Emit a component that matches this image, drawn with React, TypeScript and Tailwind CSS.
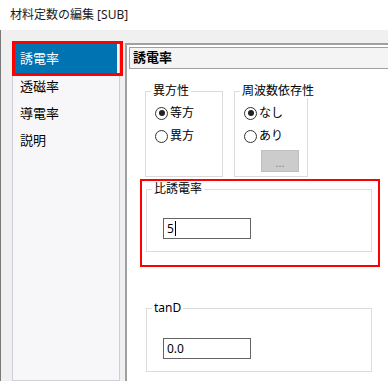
import type { ReactNode } from "react";

const font = { fontFamily: '"Noto Sans", "Noto Sans CJK JP", sans-serif' };

function Radio({ checked, label }: { checked?: boolean; label: string }) {
  return (
    <div className="flex h-[20px] items-center gap-[2px]">
      <span className="flex h-[13px] w-[13px] items-center justify-center rounded-full border border-[#333] bg-white">
        {checked ? <span className="h-[6px] w-[6px] rounded-full bg-[#222]" /> : null}
      </span>
      <span className="text-[12px] leading-none text-black">{label}</span>
    </div>
  );
}

function Group({ title, className, children }: { title: string; className: string; children: ReactNode }) {
  return (
    <fieldset className={`min-w-0 border border-[#dcdcdc] ${className}`}>
      <legend className="ml-[5px] whitespace-nowrap px-[2px] text-[12px] leading-[14px] text-black">{title}</legend>
      {children}
    </fieldset>
  );
}

function TextBox({ value, caret }: { value: string; caret?: boolean }) {
  return (
    <div className="flex h-[21px] w-[88px] items-center border border-[#646464] bg-white pl-[3px] text-[12px] text-black">
      <span>{value}</span>
      {caret ? <span className="ml-px h-[15px] w-px bg-black" /> : null}
    </div>
  );
}

const items = ["透磁率", "導電率", "説明"];

export default function App() {
  return (
    <div style={font} className="h-[381px] w-[388px] overflow-hidden bg-[#f0f0f0]">
      <div className="flex h-[30px] items-center bg-white px-[10px] text-[12px] text-[#1a1a1a]">
        材料定数の編集 [SUB]
      </div>

      <div className="flex h-[351px] border-l border-[#7a7a7a]">
        <div className="flex flex-col pl-[11px] pt-[11px]">
          <div className="relative w-[108px] flex-1 border border-[#cfcfd8] bg-[#f7f7f9] pt-[2px]">
            <div className="mx-[2px] flex h-[29px] items-center bg-[#0073b3] pl-[5px] text-[13px] text-white">誘電率</div>
            <div className="pointer-events-none absolute left-[-1px] top-[-1px] h-[35px] w-[111px] border-[3px] border-[#ff0000]" />
            {items.map((item) => (
              <div key={item} className="flex h-[27px] items-center pl-[7px] text-[13px] text-black">
                {item}
              </div>
            ))}
          </div>
        </div>

        <div className="ml-[5px] mt-[13px] flex-1 border-l-2 border-t-2 border-[#a0a0a0] bg-white">
          <div className="ml-[2px] mt-[2px] flex h-[22px] items-center border-y border-l border-[#a0a0a0] bg-[#f4f4f4] pl-[3px] text-[13px] font-bold text-black">
            誘電率
          </div>

          <div className="flex pl-[18px] pt-[15px]">
            <Group title="異方性" className="h-[93px] w-[78px]">
              <div className="flex flex-col gap-[3px] pl-[9px] pt-[5px]">
                <Radio checked label="等方" />
                <Radio label="異方" />
              </div>
            </Group>
            <Group title="周波数依存性" className="ml-[11px] h-[93px] w-[74px]">
              <div className="flex flex-col gap-[3px] pl-[9px] pt-[5px]">
                <Radio checked label="なし" />
                <Radio label="あり" />
                <div className="ml-[17px] mt-px flex h-[22px] w-[38px] items-end justify-center border border-[#bfbfbf] bg-[#cccccc] pb-[3px] text-[11px] leading-none text-[#7a8a9a]">
                  ...
                </div>
              </div>
            </Group>
          </div>

          <div className="ml-[13px] mt-[2px] h-[88px] w-[240px] border-2 border-[#ff0000] pt-px">
            <Group title="比誘電率" className="ml-[4px] h-[70px] w-[226px]">
              <div className="ml-[16px] mt-[22px]">
                <TextBox value="5" caret />
              </div>
            </Group>
          </div>

          <Group title="tanD" className="ml-[19px] mt-[34px] h-[71px] w-[226px]">
            <div className="ml-[16px] mt-[23px]">
              <TextBox value="0.0" />
            </div>
          </Group>
        </div>
      </div>
    </div>
  );
}
